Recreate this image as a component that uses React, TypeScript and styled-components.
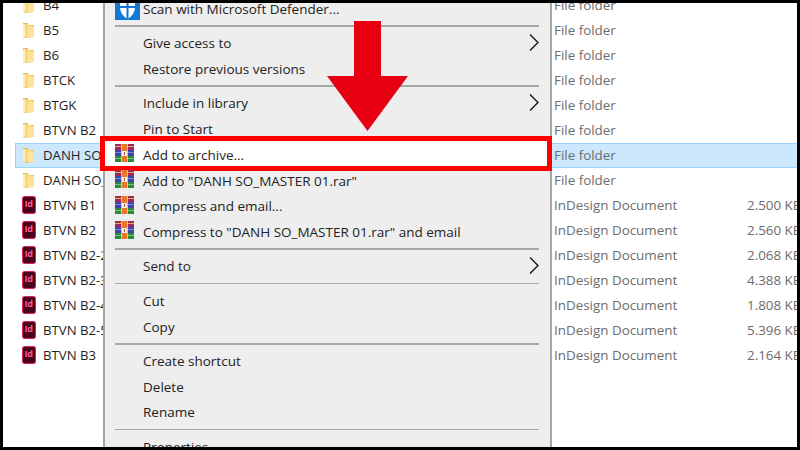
import React from 'react';
import styled, { createGlobalStyle } from 'styled-components';

const GlobalStyle = createGlobalStyle`
  html, body {
    margin: 0;
    padding: 0;
    background: #000;
  }
  body {
    font-family: "Open Sans", "Noto Sans", "Liberation Sans", sans-serif;
  }
`;

const Frame = styled.div`
  position: relative;
  box-sizing: border-box;
  width: 800px;
  height: 450px;
  border: 3px solid #000;
  background: #fff;
  overflow: hidden;
`;

const FileList = styled.div`
  display: flex;
  flex-direction: column;
  margin-top: -10.5px;
  padding-left: 12px;
`;

const FileRow = styled.div<{ $selected?: boolean }>`
  box-sizing: border-box;
  display: grid;
  grid-template-columns: 13px 519px 193px 1fr;
  align-items: center;
  height: 25px;
  padding-left: 6px;
  white-space: nowrap;
  overflow: hidden;
  font-size: 13.4px;
  background: ${({ $selected }) => ($selected ? '#cce8ff' : 'transparent')};
  border: 1px solid ${({ $selected }) => ($selected ? '#99d1ff' : 'transparent')};
  border-right: 0;
`;

const FileName = styled.span`
  padding-left: 8px;
  font-size: 13.2px;
  color: #1e1e1e;
`;

const FileMeta = styled.span`
  color: #6d6d6d;
`;

const Menu = styled.div`
  position: absolute;
  top: -7px;
  left: 100px;
  box-sizing: border-box;
  width: 449px;
  background: #eeeeee;
  border-left: 2px solid #a5a5a5;
  border-right: 2px solid #a5a5a5;
  padding: 0 11px 0 10px;
  font-size: 13.5px;
  color: #222;
`;

const MenuItem = styled.div<{ $marked?: boolean }>`
  position: relative;
  isolation: isolate;
  display: flex;
  align-items: center;
  height: 25.7px;
  white-space: nowrap;

  ${({ $marked }) =>
    $marked &&
    `
    &::before {
      content: '';
      position: absolute;
      z-index: -1;
      top: -6px;
      bottom: -3.5px;
      left: -15px;
      right: -13px;
      background: #fff;
      border: 5px solid #ff0000;
    }
  `}
`;

const MenuIcon = styled.span`
  display: flex;
  flex: 0 0 28px;
  align-items: center;
  padding-bottom: 3px;
`;

const MenuLabel = styled.span`
  flex: 1;
`;

const SubmenuMark = styled.span`
  display: flex;
  padding-bottom: 2px;
`;

const Separator = styled.div`
  height: 1.5px;
  margin: 3.65px 0;
  background: #a8a8a8;
`;

const ArrowOverlay = styled.svg`
  position: absolute;
  top: 17px;
  left: 323px;
`;

const FolderIcon = () => (
  <svg width="13" height="17" viewBox="0 0 13 17">
    <path d="M1 1 L6 1 L6 3 L12 3 L12 15 L1 16 Z" fill="#e9bb52" />
    <path d="M1 2.5 L3 2 L3 15 L1 16 Z" fill="#fff0b8" />
    <path d="M3 2 L12 4 L12 15 L3 15 Z" fill="#fbd978" />
    <path d="M6 5 L12 5 L12 15 L6 15 Z" fill="#ffe398" />
  </svg>
);

const IndesignIcon = () => (
  <svg width="14" height="18" viewBox="0 0 14 18">
    <rect x="0.5" y="0.5" width="13" height="17" rx="2" fill="#49021f" stroke="#e0205f" />
    <text x="2.4" y="10.5" fontSize="9" fontWeight="700" fontFamily="Open Sans, sans-serif" fill="#ff5a8f">
      Id
    </text>
  </svg>
);

const RarIcon = () => (
  <svg width="19" height="18" viewBox="0 0 19 18">
    <rect x="0" y="0" width="19" height="6" fill="#a3245f" />
    <rect x="0" y="6" width="19" height="6" fill="#3d46a8" />
    <rect x="0" y="12" width="19" height="6" fill="#2a8a3c" />
    <rect x="0" y="2" width="19" height="1" fill="#d8b24a" />
    <rect x="0" y="8" width="19" height="1" fill="#7d86d8" />
    <rect x="0" y="14" width="19" height="1" fill="#7cc36a" />
    <rect x="6" y="0" width="1" height="18" fill="#eee" opacity="0.7" />
    <rect x="12" y="0" width="1" height="18" fill="#eee" opacity="0.7" />
    <rect x="7" y="0" width="5" height="18" fill="#e8772a" />
    <rect x="7" y="7" width="5" height="5" fill="#f4f0ea" />
    <rect x="9" y="8" width="1" height="3" fill="#c44a2a" />
  </svg>
);

const DefenderIcon = () => (
  <svg width="25" height="25" viewBox="0 0 25 25">
    <rect width="25" height="25" fill="#0f78d4" />
    <path d="M5 3 L20 3 L20 13 Q19.5 20 12.5 24 Q5.5 20 5 13 Z" fill="#fff" />
    <rect x="11.5" y="3" width="2" height="21" fill="#0f78d4" />
    <rect x="5" y="11" width="15" height="2" fill="#0f78d4" />
  </svg>
);

const Chevron = () => (
  <svg width="10" height="17" viewBox="0 0 10 17">
    <path d="M1 0.5 L9 8.5 L1 16.5" fill="none" stroke="#111" strokeWidth="1.3" />
  </svg>
);

type FileEntry = {
  name: string;
  kind: 'folder' | 'indd';
  size?: string;
  selected?: boolean;
};

const files: FileEntry[] = [
  { name: 'B4', kind: 'folder' },
  { name: 'B5', kind: 'folder' },
  { name: 'B6', kind: 'folder' },
  { name: 'BTCK', kind: 'folder' },
  { name: 'BTGK', kind: 'folder' },
  { name: 'BTVN B2', kind: 'folder' },
  { name: 'DANH SO_MASTER 01', kind: 'folder', selected: true },
  { name: 'DANH SO_MASTER 02', kind: 'folder' },
  { name: 'BTVN B1', kind: 'indd', size: '2.500 KB' },
  { name: 'BTVN B2', kind: 'indd', size: '2.560 KB' },
  { name: 'BTVN B2-2', kind: 'indd', size: '2.068 KB' },
  { name: 'BTVN B2-3', kind: 'indd', size: '4.388 KB' },
  { name: 'BTVN B2-4', kind: 'indd', size: '1.808 KB' },
  { name: 'BTVN B2-5', kind: 'indd', size: '5.396 KB' },
  { name: 'BTVN B3', kind: 'indd', size: '2.164 KB' },
];

type MenuEntry =
  | 'sep'
  | { label: string; icon?: 'rar' | 'defender'; sub?: boolean; marked?: boolean };

const menu: MenuEntry[] = [
  { label: 'Scan with Microsoft Defender...', icon: 'defender' },
  'sep',
  { label: 'Give access to', sub: true },
  { label: 'Restore previous versions' },
  'sep',
  { label: 'Include in library', sub: true },
  { label: 'Pin to Start' },
  { label: 'Add to archive...', icon: 'rar', marked: true },
  { label: 'Add to "DANH SO_MASTER 01.rar"', icon: 'rar' },
  { label: 'Compress and email...', icon: 'rar' },
  { label: 'Compress to "DANH SO_MASTER 01.rar" and email', icon: 'rar' },
  'sep',
  { label: 'Send to', sub: true },
  'sep',
  { label: 'Cut' },
  { label: 'Copy' },
  'sep',
  { label: 'Create shortcut' },
  { label: 'Delete' },
  { label: 'Rename' },
  'sep',
  { label: 'Properties' },
];

const App: React.FC = () => (
  <Frame>
    <GlobalStyle />
    <FileList>
      {files.map((file) => (
        <FileRow key={file.name + file.kind} $selected={file.selected}>
          {file.kind === 'folder' ? <FolderIcon /> : <IndesignIcon />}
          <FileName>{file.name}</FileName>
          <FileMeta>{file.kind === 'folder' ? 'File folder' : 'InDesign Document'}</FileMeta>
          <FileMeta>{file.size}</FileMeta>
        </FileRow>
      ))}
    </FileList>
    <Menu>
      {menu.map((entry, i) =>
        entry === 'sep' ? (
          <Separator key={i} />
        ) : (
          <MenuItem key={entry.label} $marked={entry.marked}>
            <MenuIcon>
              {entry.icon === 'rar' && <RarIcon />}
              {entry.icon === 'defender' && <DefenderIcon />}
            </MenuIcon>
            <MenuLabel>{entry.label}</MenuLabel>
            {entry.sub && (
              <SubmenuMark>
                <Chevron />
              </SubmenuMark>
            )}
          </MenuItem>
        ),
      )}
    </Menu>
    <ArrowOverlay width="84" height="112" viewBox="0 0 84 112">
      <path d="M28 1 L55 1 L55 56 L82 56 L41.5 111 L1 56 L28 56 Z" fill="#e60012" />
    </ArrowOverlay>
  </Frame>
);

export default App;
